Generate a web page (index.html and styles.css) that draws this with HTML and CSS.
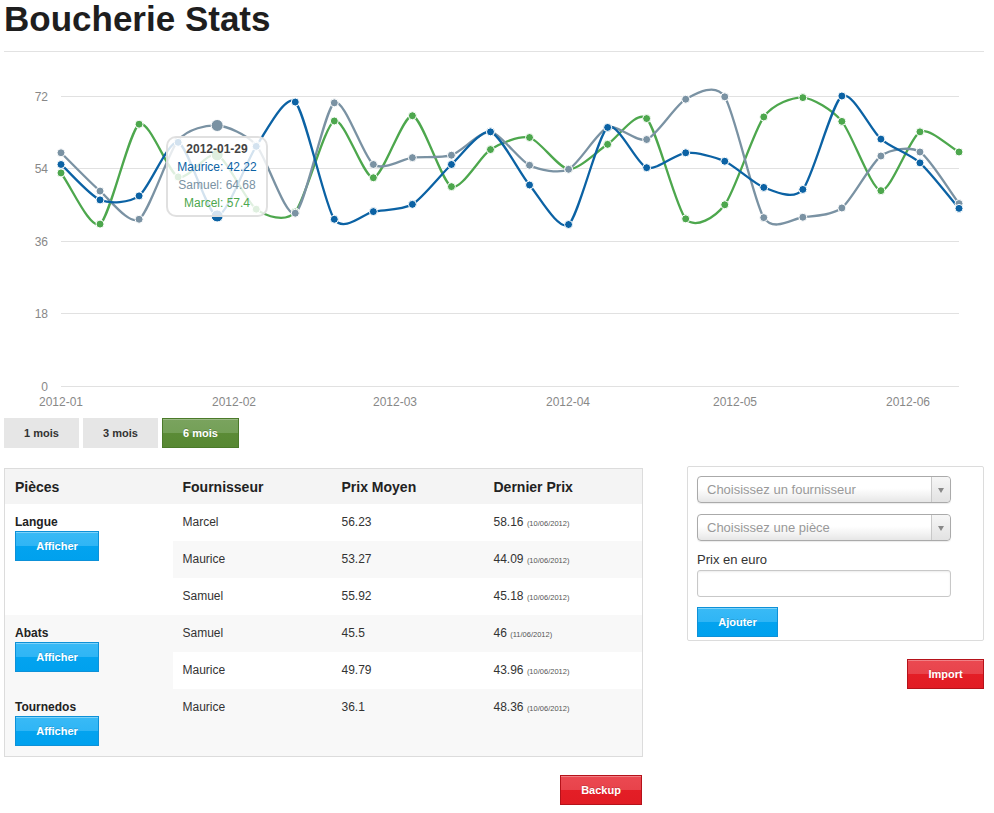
FILE: index.html
```html
<!DOCTYPE html>
<html lang="fr">
<head>
<meta charset="utf-8">
<title>Boucherie Stats</title>
<link rel="stylesheet" href="styles.css">
</head>
<body>
<div class="container">
  <header class="page-header">
    <h1>Boucherie Stats</h1>
  </header>

  <section class="chart-wrap">
    <svg id="chart" class="chart" width="980" height="362" viewBox="4 52 980 362" xmlns="http://www.w3.org/2000/svg">
      <g class="grid">
        <line x1="61" x2="959" y1="96.5" y2="96.5"/>
        <line x1="61" x2="959" y1="168.5" y2="168.5"/>
        <line x1="61" x2="959" y1="241.5" y2="241.5"/>
        <line x1="61" x2="959" y1="313.5" y2="313.5"/>
        <line x1="61" x2="959" y1="386.5" y2="386.5"/>
      </g>
      <g class="axis y-axis">
        <text x="48" y="100.5">72</text>
        <text x="48" y="172.5">54</text>
        <text x="48" y="245.5">36</text>
        <text x="48" y="317.5">18</text>
        <text x="48" y="390.5">0</text>
      </g>
      <g class="axis x-axis">
        <text x="61" y="406">2012-01</text>
        <text x="234" y="406">2012-02</text>
        <text x="395" y="406">2012-03</text>
        <text x="568" y="406">2012-04</text>
        <text x="735" y="406">2012-05</text>
        <text x="908" y="406">2012-06</text>
      </g>
      <g id="series"></g>
    </svg>
    <div class="hover">
      <div class="hover-label">2012-01-29</div>
      <div class="hover-point maurice">Maurice: 42.22</div>
      <div class="hover-point samuel">Samuel: 64.68</div>
      <div class="hover-point marcel">Marcel: 57.4</div>
    </div>
  </section>

  <div class="ranges">
    <button class="range" type="button">1 mois</button>
    <button class="range" type="button">3 mois</button>
    <button class="range range-active" type="button">6 mois</button>
  </div>

  <div class="main">
    <div class="col-left">
      <table class="prices">
        <colgroup>
          <col class="c1"><col class="c2"><col class="c3"><col class="c4">
        </colgroup>
        <thead>
          <tr><th>Pièces</th><th>Fournisseur</th><th>Prix Moyen</th><th>Dernier Prix</th></tr>
        </thead>
        <tbody>
          <tr>
            <td rowspan="3" class="piece"><strong>Langue</strong><button class="btn btn-blue" type="button">Afficher</button></td>
            <td>Marcel</td><td>56.23</td><td>58.16 <small>(10/06/2012)</small></td>
          </tr>
          <tr><td>Maurice</td><td>53.27</td><td>44.09 <small>(10/06/2012)</small></td></tr>
          <tr><td>Samuel</td><td>55.92</td><td>45.18 <small>(10/06/2012)</small></td></tr>
          <tr>
            <td rowspan="2" class="piece"><strong>Abats</strong><button class="btn btn-blue" type="button">Afficher</button></td>
            <td>Samuel</td><td>45.5</td><td>46 <small>(11/06/2012)</small></td>
          </tr>
          <tr><td>Maurice</td><td>49.79</td><td>43.96 <small>(10/06/2012)</small></td></tr>
          <tr>
            <td class="piece"><strong>Tournedos</strong><button class="btn btn-blue" type="button">Afficher</button></td>
            <td>Maurice</td><td>36.1</td><td>48.36 <small>(10/06/2012)</small></td>
          </tr>
        </tbody>
      </table>
      <div class="actions">
        <button class="btn btn-red" type="button">Backup</button>
      </div>
    </div>

    <aside class="col-right">
      <form class="panel">
        <div class="select"><span>Choisissez un fournisseur</span><b class="arrow"></b></div>
        <div class="select"><span>Choisissez une pièce</span><b class="arrow"></b></div>
        <label class="field-label" for="prix">Prix en euro</label>
        <input id="prix" class="field" type="text">
        <button class="btn btn-blue" type="button">Ajouter</button>
      </form>
      <div class="actions">
        <button class="btn btn-red" type="button">Import</button>
      </div>
    </aside>
  </div>
</div>
<script src="script.js"></script>
</body>
</html>
```

FILE: styles.css
```css
* { box-sizing: border-box; }

body {
  margin: 0;
  font-family: "Liberation Sans", Arial, sans-serif;
  color: #333;
  background: #fff;
}

.container {
  width: 980px;
  margin-left: 4px;
}

.page-header {
  padding-bottom: 13px;
  border-bottom: 1px solid #e2e2e2;
}

.page-header h1 {
  margin: 0;
  font-size: 35px;
  line-height: 38px;
  font-weight: bold;
  color: #1e1e1e;
}

/* chart */
.chart-wrap {
  position: relative;
  height: 362px;
}

.chart { display: block; }

.grid line {
  stroke: #e1e1e1;
  stroke-width: 1;
}

.axis text {
  font-family: "Liberation Sans", Arial, sans-serif;
  font-size: 12px;
  fill: #888;
}

.y-axis text { text-anchor: end; }
.x-axis text { text-anchor: middle; }

.hover {
  position: absolute;
  left: 162px;
  top: 84px;
  width: 102px;
  padding: 2px 6px 3px;
  border: 2px solid rgba(218, 218, 218, 0.85);
  border-radius: 10px;
  background: rgba(255, 255, 255, 0.82);
  font-size: 12px;
  line-height: 18px;
  text-align: center;
  color: #666;
  white-space: nowrap;
}

.hover-label { font-weight: bold; color: #444; }
.maurice { color: #0b62a4; }
.samuel { color: #7a92a3; }
.marcel { color: #4da74d; }

/* range buttons */
.ranges {
  display: flex;
  gap: 4px;
  margin-top: 4px;
}

.range {
  width: 75px;
  height: 30px;
  padding: 0;
  border: 0;
  background: #e6e6e6;
  font: bold 11px/30px "Liberation Sans", Arial, sans-serif;
  color: #333;
  cursor: pointer;
}

.range-active {
  width: 77px;
  border: 1px solid #4b7a2a;
  line-height: 26px;
  color: #fff;
  background: linear-gradient(to bottom, #7aa35e 0%, #74a057 50%, #5b8b36 50%, #578833 100%);
  box-shadow: inset 0 1px 0 rgba(255, 255, 255, 0.25);
  text-shadow: 0 -1px 0 rgba(0, 0, 0, 0.2);
}

/* main area */
.main {
  display: grid;
  grid-template-columns: 638px 297px;
  column-gap: 45px;
  margin-top: 18px;
  align-items: start;
}

.col-left { padding-top: 2px; }

.prices {
  width: 638px;
  border-collapse: collapse;
  border: 1px solid #dcdcdc;
  background: #fff;
  table-layout: fixed;
}

.prices .c1 { width: 168px; }
.prices .c2 { width: 159px; }
.prices .c3 { width: 152px; }
.prices .c4 { width: 159px; }

.prices th {
  text-align: left;
  padding: 9px 10px 8px;
  font-size: 14px;
  line-height: 18px;
  font-weight: bold;
  color: #222;
  background: #f4f4f4;
}

.prices td {
  vertical-align: top;
  padding: 9px 10px 10px;
  font-size: 12px;
  line-height: 18px;
  color: #333;
}

.prices tbody tr:nth-child(even) td { background: #f8f8f8; }

.prices small {
  font-size: 7.5px;
  line-height: 1;
  color: #555;
}

.piece strong {
  display: block;
  color: #222;
}

.piece .btn {
  display: block;
  width: 84px;
  padding: 0;
}

/* buttons */
.btn {
  height: 30px;
  padding: 0 19px;
  border: 1px solid;
  font: bold 11px/28px "Liberation Sans", Arial, sans-serif;
  color: #fff;
  text-shadow: 0 -1px 0 rgba(0, 0, 0, 0.15);
  cursor: pointer;
}

.btn-blue {
  border-color: #0d91d8;
  background: linear-gradient(to bottom, #39baf6 0%, #2fb5f5 50%, #03a3ef 50%, #00a1ee 100%);
  box-shadow: inset 0 1px 0 rgba(255, 255, 255, 0.35);
}

.btn-red {
  border-color: #b5121a;
  background: linear-gradient(to bottom, #eb4951 0%, #e8434b 50%, #e41e26 50%, #e11c24 100%);
  box-shadow: inset 0 1px 0 rgba(255, 255, 255, 0.3);
}

.actions {
  display: flex;
  justify-content: flex-end;
  margin-top: 18px;
}

.col-left .actions .btn { width: 82px; padding: 0; }
.col-right .actions .btn { width: 77px; padding: 0; }

/* form panel */
.panel {
  margin: 0;
  padding: 9px 9px 3px;
  border: 1px solid #dcdcdc;
  border-radius: 2px;
  background: #fff;
}

.select {
  position: relative;
  width: 254px;
  height: 27px;
  margin-bottom: 11px;
  padding-left: 9px;
  border: 1px solid #aaa;
  border-radius: 4px;
  background: linear-gradient(to bottom, #ffffff 0%, #ffffff 45%, #f0f0f0 80%, #e6e6e6 100%);
  box-shadow: 0 1px 1px rgba(0, 0, 0, 0.08);
  font-size: 13px;
  line-height: 25px;
  color: #999;
}

.arrow {
  position: absolute;
  right: 0;
  top: 0;
  width: 19px;
  height: 25px;
  border-left: 1px solid #c8c8c8;
  border-radius: 0 4px 4px 0;
  background: linear-gradient(to bottom, #f6f6f6 0%, #e2e2e2 100%);
}

.arrow::after {
  content: "";
  position: absolute;
  left: 6px;
  top: 11px;
  border-left: 3px solid transparent;
  border-right: 3px solid transparent;
  border-top: 5px solid #888;
}

.field-label {
  display: block;
  font-size: 13px;
  line-height: 16px;
  color: #333;
  margin-top: 1px;
  margin-bottom: 2px;
}

.field {
  display: block;
  width: 254px;
  height: 27px;
  margin: 0 0 10px;
  padding: 4px 6px;
  border: 1px solid #c8c8c8;
  border-radius: 3px;
  background: #fff;
  box-shadow: inset 0 1px 2px rgba(0, 0, 0, 0.08);
  font: 13px "Liberation Sans", Arial, sans-serif;
}

.panel .btn { display: block; width: 81px; padding: 0; }
```

FILE: script.js
```js
(function () {
  var NS = "http://www.w3.org/2000/svg";
  var L = 61, R = 959, T = 96, B = 386, YMAX = 72, DAYS = 161, HOVER = 4;

  var series = [
    { name: "Maurice", color: "#0b62a4",
      data: [55.0, 46.2, 47.2, 60.5, 42.22, 59.5, 70.5, 41.4, 43.3, 45.1, 55.0, 63.1, 49.9, 40.1, 64.2, 54.2, 57.9, 55.8, 49.3, 48.8, 72.0, 61.3, 55.4, 44.1] },
    { name: "Samuel", color: "#7a92a3",
      data: [57.9, 48.4, 41.4, 61.0, 64.68, 59.8, 42.9, 70.3, 55.0, 56.7, 57.3, 63.1, 54.8, 53.8, 64.2, 61.2, 71.2, 71.8, 41.8, 41.9, 44.2, 57.1, 58.1, 45.3] },
    { name: "Marcel", color: "#4da74d",
      data: [52.9, 40.2, 65.0, 51.9, 57.4, 43.9, 43.2, 65.8, 51.7, 67.1, 49.5, 58.7, 61.7, 53.8, 60.0, 66.4, 41.5, 45.0, 66.8, 71.6, 65.7, 48.5, 63.1, 58.1] }
  ];

  function px(i) { return L + (i * 7) * (R - L) / DAYS; }
  function py(v) { return B - v * (B - T) / YMAX; }
  function f(n) { return n.toFixed(2); }

  function gradients(c) {
    return c.map(function (p, i) {
      var a = c[i - 1] || p, b = c[i + 1] || p;
      return (b.y - a.y) / (b.x - a.x);
    });
  }

  function pathFor(c) {
    var g = gradients(c);
    var d = "M" + f(c[0].x) + "," + f(c[0].y);
    for (var i = 1; i < c.length; i++) {
      var p = c[i - 1], q = c[i], ix = (q.x - p.x) / 4;
      var x1 = p.x + ix, y1 = Math.min(B, p.y + ix * g[i - 1]);
      var x2 = q.x - ix, y2 = Math.min(B, q.y - ix * g[i]);
      d += "C" + [x1, y1, x2, y2, q.x, q.y].map(f).join(",");
    }
    return d;
  }

  var layer = document.getElementById("series");
  var coords = series.map(function (s) {
    return s.data.map(function (v, i) { return { x: px(i), y: py(v) }; });
  });

  var k, el;
  for (k = series.length - 1; k >= 0; k--) {
    el = document.createElementNS(NS, "path");
    el.setAttribute("d", pathFor(coords[k]));
    el.setAttribute("fill", "none");
    el.setAttribute("stroke", series[k].color);
    el.setAttribute("stroke-width", "2.3");
    layer.appendChild(el);
  }
  for (k = series.length - 1; k >= 0; k--) {
    coords[k].forEach(function (p, i) {
      var c = document.createElementNS(NS, "circle");
      c.setAttribute("cx", f(p.x));
      c.setAttribute("cy", f(p.y));
      c.setAttribute("r", i === HOVER ? "6" : "4");
      c.setAttribute("fill", series[k].color);
      c.setAttribute("stroke", "#ffffff");
      c.setAttribute("stroke-width", "1");
      layer.appendChild(c);
    });
  }
})();
```
